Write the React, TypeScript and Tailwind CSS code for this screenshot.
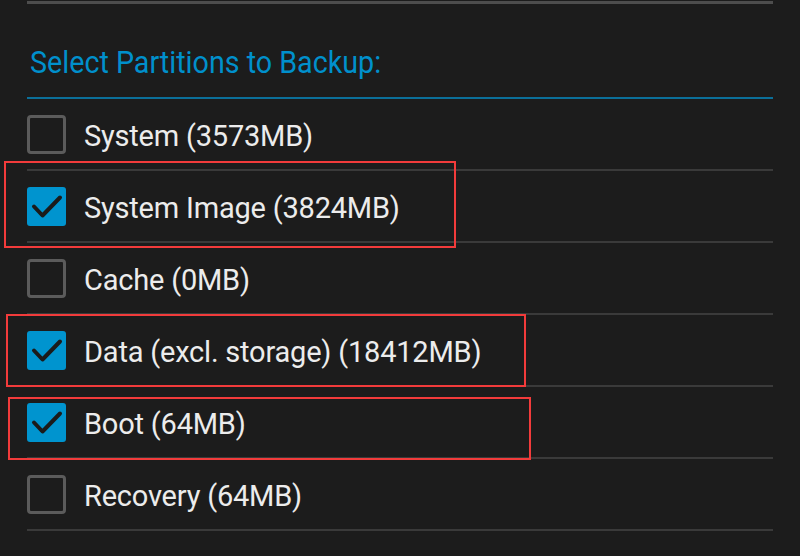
const partitions = [
  { label: 'System (3573MB)', checked: false },
  { label: 'System Image (3824MB)', checked: true },
  { label: 'Cache (0MB)', checked: false },
  { label: 'Data (excl. storage) (18412MB)', checked: true },
  { label: 'Boot (64MB)', checked: true },
  { label: 'Recovery (64MB)', checked: false },
];

function CheckBox({ checked }: { checked: boolean }) {
  if (checked) {
    return (
      <div className="w-[39px] h-[39px] rounded-[3px] bg-[#0094cf] shrink-0">
        <svg viewBox="0 0 39 39" className="w-full h-full">
          <path
            d="M7 19.5 L15.5 28.5 L33 10.5"
            fill="none"
            stroke="#1b1b1b"
            strokeWidth={4}
            strokeLinecap="round"
            strokeLinejoin="round"
          />
        </svg>
      </div>
    );
  }
  return <div className="w-[39px] h-[39px] rounded-[4px] border-[3px] border-[#5b5b5b] shrink-0" />;
}

export default function App() {
  return (
    <div
      className="relative w-[800px] h-[556px] bg-[#1c1c1c] overflow-hidden"
      style={{ fontFamily: 'Roboto, "Noto Sans", sans-serif' }}
    >
      <div className="w-[746px] ml-[27px]">
        <div className="h-[3px] mt-[1px] bg-[#4d4d4d]" />
        <div className="h-[93px] flex items-end pb-[11px] pl-[3px]">
          <span className="text-[#0090cc] text-[31px] scale-x-[0.925] origin-left whitespace-nowrap">
            Select Partitions to Backup:
          </span>
        </div>
        <div className="h-[2px] bg-[#0b6f99]" />
        {partitions.map((p) => (
          <div key={p.label}>
            <div className="h-[70px] flex items-center gap-[18px]">
              <CheckBox checked={p.checked} />
              <span className="text-[#ececec] text-[29px] tracking-[-0.2px] pt-[6px]">{p.label}</span>
            </div>
            <div className="h-[2px] bg-[#3a3a3a]" />
          </div>
        ))}
      </div>

      {/* annotation boxes */}
      <div className="absolute left-[4px] top-[161px] w-[452px] h-[87px] border-2 border-[#f23b3b]" />
      <div className="absolute left-[6px] top-[314px] w-[520px] h-[73px] border-2 border-[#f23b3b]" />
      <div className="absolute left-[8px] top-[397px] w-[523px] h-[63px] border-2 border-[#f23b3b]" />
    </div>
  );
}
